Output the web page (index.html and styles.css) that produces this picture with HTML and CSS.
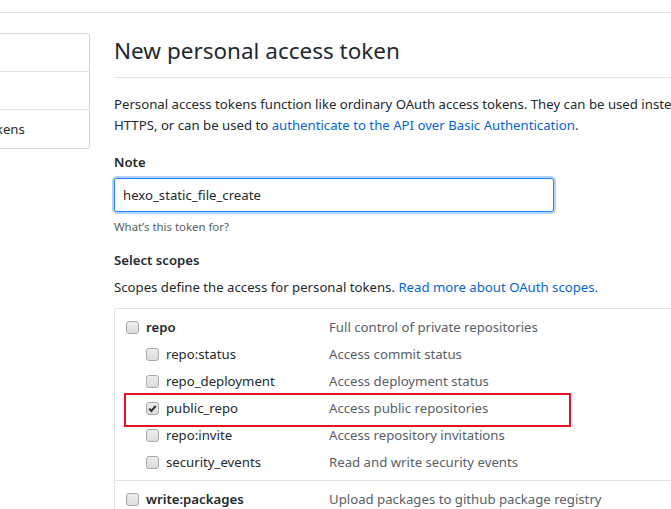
FILE: index.html
```html
<!DOCTYPE html>
<html>
<head>
<meta charset="utf-8">
<link rel="stylesheet" href="styles.css">
</head>
<body>
<div class="header"></div>
<div class="layout">
  <nav class="menu">
    <div class="menu-item">GitHub Apps</div>
    <div class="menu-item">OAuth Apps</div>
    <div class="menu-item">Personal access tokens</div>
  </nav>
  <main class="main">
    <h1 class="subhead">New personal access token</h1>
    <p class="intro">Personal access tokens function like ordinary OAuth access tokens. They can be used instead of a password for Git over HTTPS, or can be used to <a href="#">authenticate to the API over Basic Authentication</a>.</p>
    <div class="field">
      <label class="label">Note</label>
      <input class="input" type="text" value="hexo_static_file_create">
      <div class="note">What’s this token for?</div>
    </div>
    <div class="label scopes-title">Select scopes</div>
    <p class="scopes-desc">Scopes define the access for personal tokens. <a href="#">Read more about OAuth scopes.</a></p>
    <div class="scopes">
      <div class="group">
        <div class="row"><span class="cb"></span><span class="name strong">repo</span><span class="desc">Full control of private repositories</span></div>
        <div class="row sub"><span class="cb"></span><span class="name">repo:status</span><span class="desc">Access commit status</span></div>
        <div class="row sub"><span class="cb"></span><span class="name">repo_deployment</span><span class="desc">Access deployment status</span></div>
        <div class="row sub highlighted"><span class="cb checked"><svg viewBox="0 0 13 13" width="13" height="13"><path d="M3.2 6.6 L5.4 8.9 L9.8 3.8" fill="none" stroke="#333" stroke-width="2"/></svg></span><span class="name">public_repo</span><span class="desc">Access public repositories</span><span class="mark"></span></div>
        <div class="row sub"><span class="cb"></span><span class="name">repo:invite</span><span class="desc">Access repository invitations</span></div>
        <div class="row sub"><span class="cb"></span><span class="name">security_events</span><span class="desc">Read and write security events</span></div>
      </div>
      <div class="group">
        <div class="row"><span class="cb"></span><span class="name strong">write:packages</span><span class="desc">Upload packages to github package registry</span></div>
      </div>
    </div>
  </main>
</div>
</body>
</html>
```
FILE: styles.css
```css
html, body {
  margin: 0;
  padding: 0;
  background: #fff;
  overflow: hidden;
}
body {
  font-family: "Segoe UI", "Noto Sans", "Open Sans", sans-serif;
  font-size: 13.2px;
  line-height: 21px;
  color: #24292e;
  width: 671px;
  height: 509px;
}
.header {
  height: 12px;
  border-bottom: 1px solid #e1e4e8;
}
.layout {
  display: flex;
  padding-top: 20px;
  gap: 24px;
}
.menu {
  width: 240px;
  margin-left: -150px;
  flex: none;
  align-self: flex-start;
  border: 1px solid #d1d5da;
  border-radius: 3px;
  box-sizing: border-box;
}
.menu-item {
  height: 38px;
  box-sizing: border-box;
  padding: 9px 16px 8px 31px;
  border-bottom: 1px solid #e1e4e8;
  white-space: nowrap;
}
.menu-item:last-child {
  border-bottom: none;
}
.main {
  flex: none;
  width: 900px;
}
.subhead {
  font-size: 22.5px;
  font-weight: 400;
  line-height: 36px;
  margin: 0 0 16px;
  padding-bottom: 8px;
  border-bottom: 1px solid #e1e4e8;
}
a {
  color: #0366d6;
  text-decoration: none;
}
.intro {
  margin: 0 0 16px;
  width: 770px;
}
.label {
  display: block;
  font-weight: 600;
  margin-bottom: 5px;
}
.input {
  display: block;
  box-sizing: border-box;
  width: 440px;
  height: 34px;
  padding: 6px 8px;
  font: inherit;
  color: #24292e;
  border: 1px solid #2188ff;
  border-radius: 3px;
  box-shadow: 0 0 0 2px rgba(3, 102, 214, 0.3);
  outline: none;
}
.note {
  font-size: 11.4px;
  line-height: 18px;
  color: #586069;
  margin-top: 6px;
}
.scopes-title {
  margin-top: 14px;
  margin-bottom: 6px;
}
.scopes-desc {
  margin: 0 0 10px;
}
.scopes {
  border: 1px solid #e1e4e8;
  border-radius: 3px;
}
.group {
  padding: 5px 0 4px;
  border-bottom: 1px solid #e1e4e8;
}
.row {
  position: relative;
  display: flex;
  align-items: center;
  height: 27px;
  padding-left: 11px;
  white-space: nowrap;
}
.row.sub {
  padding-left: 31px;
}
.cb {
  flex: none;
  width: 13px;
  height: 13px;
  box-sizing: border-box;
  border: 1px solid #a9a9a9;
  border-radius: 3px;
  background: linear-gradient(#ededed, #dcdcdc);
  margin-right: 7px;
  display: flex;
}
.cb svg {
  margin: -1px;
}
.name {
  width: 183px;
  flex: none;
}
.row.sub .name {
  width: 163px;
}
.strong {
  font-weight: 600;
}
.desc {
  color: #586069;
}
.mark {
  position: absolute;
  left: 9px;
  top: -2px;
  width: 447px;
  height: 34px;
  box-sizing: border-box;
  border: 2px solid #e81123;
}
```
